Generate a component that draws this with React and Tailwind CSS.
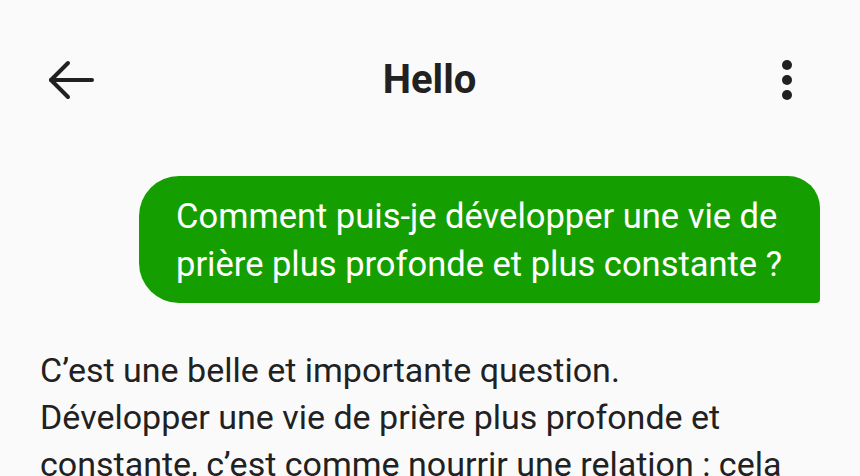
import React from 'react';

function App() {
    return (
        <div className="w-[860px] h-[476px] overflow-hidden bg-[#fafafa] text-[#212121]" style={{ fontFamily: 'Roboto, sans-serif' }}>
            {/* Header */}
            <div className="h-[160px] flex items-center justify-between pl-[48px] pr-[49px]">
                <svg width="48" height="48" viewBox="0 0 48 48" fill="none" stroke="#212121" strokeWidth="4" strokeLinecap="round" strokeLinejoin="round">
                    <path d="M3 24H44" />
                    <path d="M20 7L3 24L20 41" />
                </svg>
                <h1 className="text-[40px] font-bold leading-[48px]">Hello</h1>
                <svg width="48" height="48" viewBox="0 0 48 48" fill="#212121">
                    <circle cx="24" cy="9" r="5" />
                    <circle cx="24" cy="24" r="5" />
                    <circle cx="24" cy="39" r="5" />
                </svg>
            </div>

            {/* User bubble */}
            <div className="flex justify-end pr-[40px] mt-[16px]">
                <div className="bg-[#159e00] text-white text-[34.5px] leading-[48px] pl-[37px] pr-[38px] pt-[16px] pb-[15px] rounded-tl-[40px] rounded-tr-[32px] rounded-bl-[40px] rounded-br-[4px]">
                    Comment puis-je développer une vie de<br />prière plus profonde et plus constante ?
                </div>
            </div>

            {/* Reply */}
            <div className="pl-[40px] pr-[20px] pt-[44px] text-[34px] leading-[47px]">
                C’est une belle et importante question.<br />
                Développer une vie de prière plus profonde et constante, c’est comme nourrir une relation : cela demande du temps, de la sincérité et de la régularité.
            </div>
        </div>
    );
}

export default App;
